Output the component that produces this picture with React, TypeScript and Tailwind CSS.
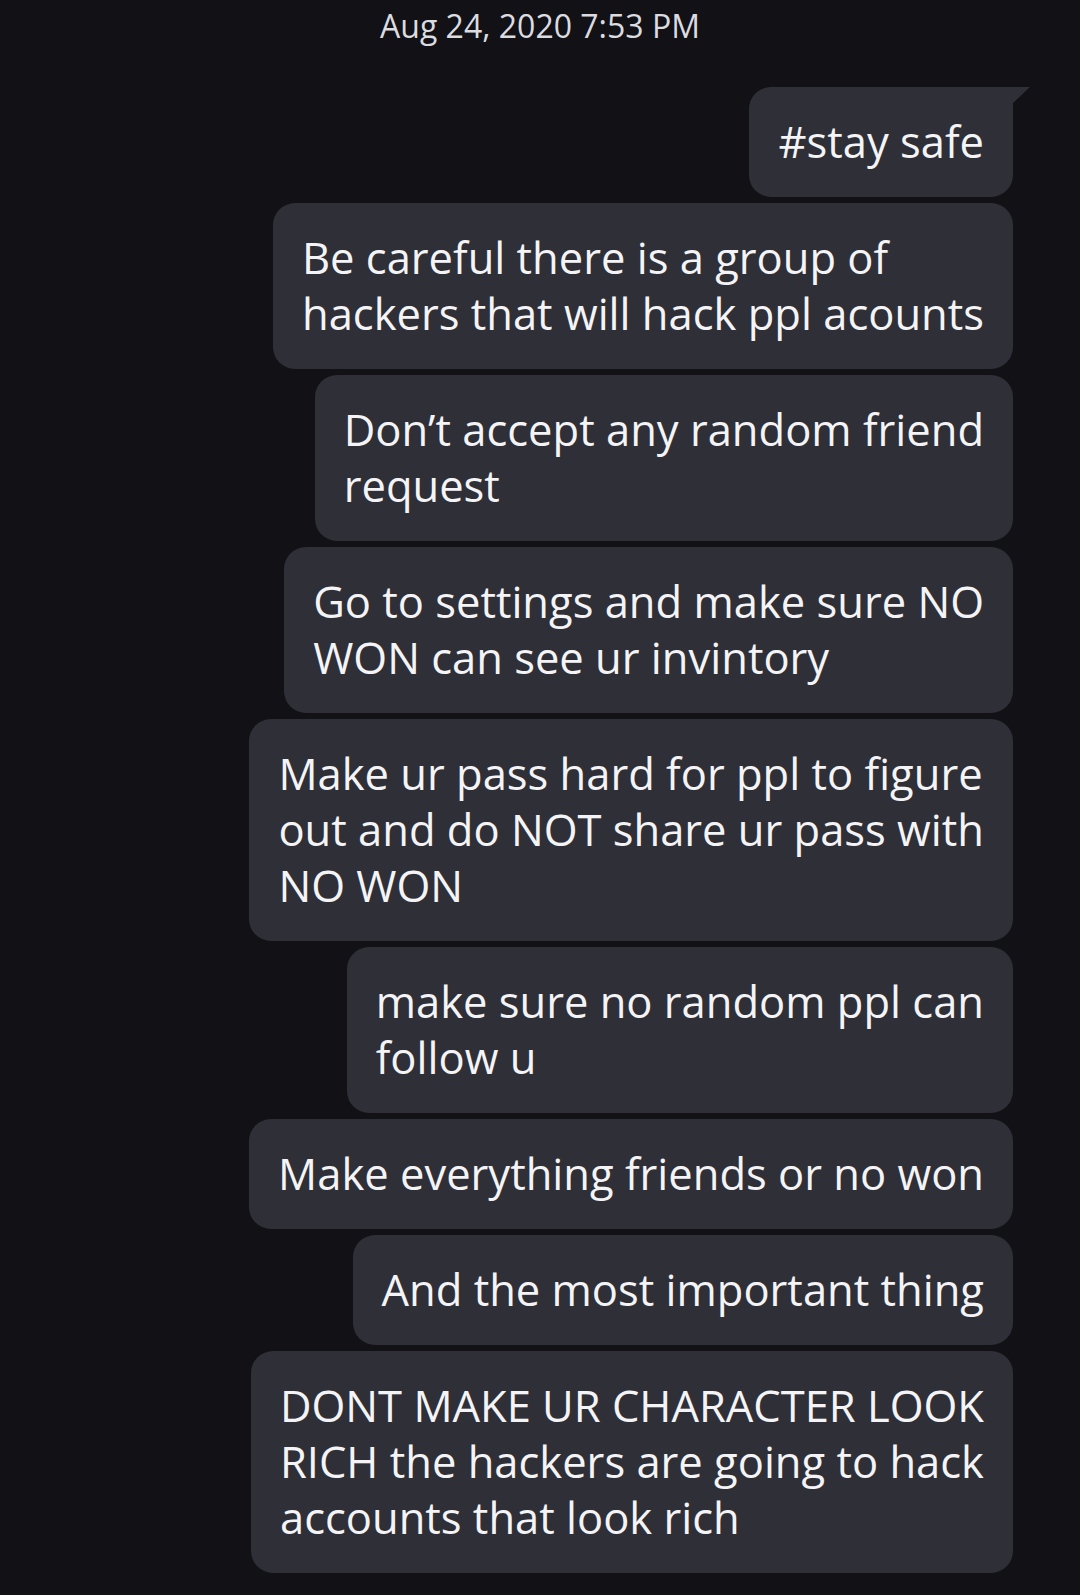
import React from "react";

type Msg = { lines: string[]; tail?: boolean };

const messages: Msg[] = [
  { lines: ["#stay safe"], tail: true },
  { lines: ["Be careful there is a group of", "hackers that will hack ppl acounts"] },
  { lines: ["Don\u2019t accept any random friend", "request"] },
  { lines: ["Go to settings and make sure NO", "WON can see ur invintory"] },
  { lines: ["Make ur pass hard for ppl to figure", "out and do NOT share ur pass with", "NO WON"] },
  { lines: ["make sure no random ppl can", "follow u"] },
  { lines: ["Make everything friends or no won"] },
  { lines: ["And the most important thing"] },
  { lines: ["DONT MAKE UR CHARACTER LOOK", "RICH the hackers are going to hack", "accounts that look rich"] },
];

function Bubble({ lines, tail }: Msg) {
  return (
    <div
      className={
        tail
          ? "relative rounded-[22px] rounded-tr-none bg-[#2f2f37] px-[29px] py-[27px]"
          : "relative rounded-[22px] bg-[#2f2f37] px-[29px] py-[27px]"
      }
    >
      {lines.map((l, i) => (
        <div key={i} className="whitespace-nowrap text-[43.5px] leading-[56px] text-[#f4f4f6]">
          {l}
        </div>
      ))}
      {tail && (
        <svg className="absolute top-0 right-[-17px]" width="17" height="16" viewBox="0 0 17 16">
          <polygon points="0,0 17,0 0,16" fill="#2f2f37" />
        </svg>
      )}
    </div>
  );
}

export default function App() {
  return (
    <div
      className="min-h-[1595px] w-[1080px] bg-[#111116] pb-10"
      style={{ fontFamily: "'Open Sans', 'Noto Sans', sans-serif" }}
    >
      <div className="pt-[6px] text-center text-[32px] leading-[40px] text-[#dcdce0]">
        Aug 24, 2020 7:53 PM
      </div>
      <div className="mt-[41px] flex flex-col items-end gap-[6px] pr-[67px]">
        {messages.map((m, i) => (
          <Bubble key={i} {...m} />
        ))}
      </div>
    </div>
  );
}
